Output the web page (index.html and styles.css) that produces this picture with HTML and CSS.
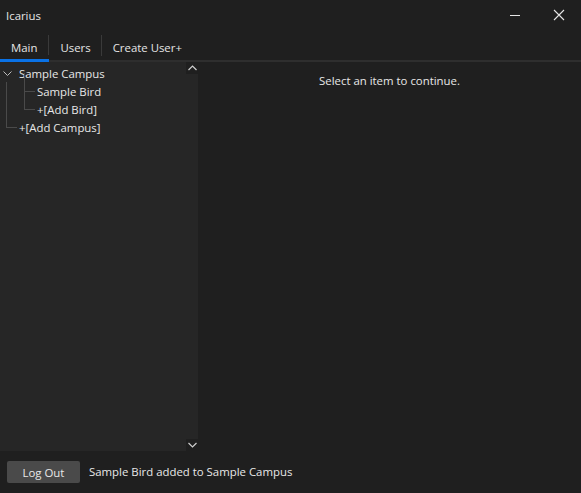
FILE: index.html
```html
<!DOCTYPE html>
<html>
<head>
<meta charset="utf-8">
<link rel="stylesheet" href="styles.css">
</head>
<body>
<div class="window">
  <div class="titlebar">
    <span class="title">Icarius</span>
    <div class="controls">
      <span class="ctl"><svg width="12" height="12" viewBox="0 0 12 12"><line x1="1" y1="6.5" x2="11" y2="6.5" stroke="#e6e6e6" stroke-width="1"/></svg></span>
      <span class="ctl"><svg width="12" height="12" viewBox="0 0 12 12"><path d="M1 1L11 11M11 1L1 11" stroke="#e6e6e6" stroke-width="1.1"/></svg></span>
    </div>
  </div>
  <div class="tabs">
    <div class="tab active">Main</div>
    <div class="tab">Users</div>
    <div class="tab last">Create User+</div>
  </div>
  <div class="main">
    <div class="tree">
      <div class="tree-body">
        <div class="node root">
          <svg class="chev" width="9" height="6" viewBox="0 0 9 6"><path d="M0.5 0.5L4.5 4.5L8.5 0.5" fill="none" stroke="#bdbdbd" stroke-width="1"/></svg>
          <span>Sample Campus</span>
        </div>
        <div class="children">
          <div class="node leaf"><span>Sample Bird</span></div>
          <div class="node leaf lastleaf"><span>+[Add Bird]</span></div>
        </div>
        <div class="node add-root"><span>+[Add Campus]</span></div>
      </div>
      <div class="scrollbar">
        <div class="sb-btn"><svg width="9" height="6" viewBox="0 0 9 6"><path d="M0.5 5L4.5 1L8.5 5" fill="none" stroke="#cfcfcf" stroke-width="1.2"/></svg></div>
        <div class="sb-track"></div>
        <div class="sb-btn"><svg width="9" height="6" viewBox="0 0 9 6"><path d="M0.5 1L4.5 5L8.5 1" fill="none" stroke="#cfcfcf" stroke-width="1.2"/></svg></div>
      </div>
    </div>
    <div class="content">Select an item to continue.</div>
  </div>
  <div class="footer">
    <button class="btn">Log Out</button>
    <span class="status">Sample Bird added to Sample Campus</span>
  </div>
</div>
</body>
</html>
```
FILE: styles.css
```css
html, body {
  margin: 0;
  padding: 0;
  background: #1f1f1f;
}
body {
  font-family: "Open Sans", "Noto Sans", sans-serif;
  font-size: 11.4px;
  color: #e8e8e8;
}
.window {
  width: 581px;
  height: 493px;
  display: flex;
  flex-direction: column;
  background: #1f1f1f;
}
.titlebar {
  height: 32px;
  display: flex;
  align-items: center;
  justify-content: space-between;
  padding-left: 6px;
}
.title {
  color: #e6e6e6;
  margin-top: -1px;
}
.controls {
  display: flex;
  height: 32px;
}
.ctl {
  width: 44px;
  display: flex;
  align-items: center;
  justify-content: center;
  margin-top: -3px;
}
.tabs {
  display: flex;
  height: 28px;
  border-bottom: 2px solid #2e2e2e;
  box-sizing: content-box;
}
.tab {
  position: relative;
  display: flex;
  align-items: center;
  padding: 0 11px 0 11px;
  height: 28px;
  box-sizing: border-box;
  color: #e6e6e6;
  padding-top: 2px;
}
.tab::after {
  content: "";
  position: absolute;
  right: 0;
  top: 3px;
  bottom: 4px;
  width: 1px;
  background: #3a3a3a;
}
.tab.last::after { display: none; }
.tab.active {
  border-bottom: 3px solid #0a72e6;
  margin-bottom: -2px;
  height: 30px;
  padding-left: 11px;
  padding-right: 12px;
  padding-top: 3px;
}
.main {
  flex: 1;
  display: flex;
  min-height: 0;
}
.tree {
  width: 198px;
  display: flex;
  background: #262626;
  height: 389px;
}
.tree-body {
  flex: 1;
  padding-top: 2px;
  position: relative;
}
.node {
  height: 18px;
  display: flex;
  align-items: center;
  position: relative;
  white-space: nowrap;
  color: #e8e8e8;
}
.root { padding-left: 19px; }
.chev {
  position: absolute;
  left: 3px;
  top: 7px;
}
.children {
  position: relative;
  margin-left: 6px;
  border-left: 1px solid #4a4a4a;
}
.leaf { padding-left: 30px; }
.leaf::before {
  content: "";
  position: absolute;
  left: 17px;
  top: -9px;
  height: 18px;
  border-left: 1px solid #4a4a4a;
}
.leaf::after {
  content: "";
  position: absolute;
  left: 17px;
  width: 11px;
  top: 9px;
  border-top: 1px solid #4a4a4a;
}
.add-root { padding-left: 19px; }
.add-root::before {
  content: "";
  position: absolute;
  left: 6px;
  top: 0;
  height: 9px;
  border-left: 1px solid #4a4a4a;
}
.add-root::after {
  content: "";
  position: absolute;
  left: 6px;
  width: 11px;
  top: 9px;
  border-top: 1px solid #4a4a4a;
}
.scrollbar {
  width: 12px;
  display: flex;
  flex-direction: column;
  background: #1f1f1f;
}
.sb-btn {
  height: 12px;
  display: flex;
  align-items: center;
  justify-content: center;
  background: #1f1f1f;
}
.sb-track {
  flex: 1;
  background: #262626;
}
.content {
  flex: 1;
  text-align: center;
  padding-top: 11px;
  color: #e8e8e8;
}
.footer {
  height: 41px;
  display: flex;
  align-items: center;
  padding-left: 7px;
}
.btn {
  font: inherit;
  color: #e8e8e8;
  background: #4a4a4a;
  border: none;
  border-radius: 2px;
  width: 73px;
  height: 22px;
  padding: 0;
  margin-top: -1px;
}
.status {
  margin-left: 9px;
  margin-top: -2px;
}
```
